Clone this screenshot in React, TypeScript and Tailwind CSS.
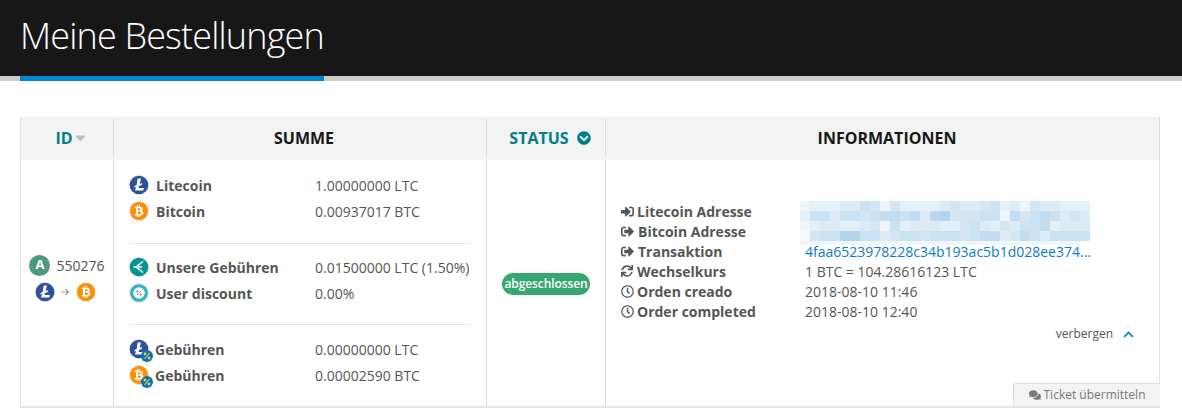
import React from "react";
import { FaBtc, FaSignInAlt, FaSignOutAlt, FaSync, FaRegClock, FaComments, FaChevronCircleDown, FaCaretDown } from "react-icons/fa";

const Ltc = ({ s = 20 }: { s?: number }) => (
  <svg width={s} height={s} viewBox="0 0 20 20" className="shrink-0 block">
    <circle cx="10" cy="10" r="10" fill="#e6e6e6" />
    <circle cx="10" cy="10" r="9.3" fill="#2f5199" />
    <path d="M8.6 3.6h3.4L10.6 9l2.6-1-.5 2-2.7 1-.5 2h5.4l-.7 2.6H6l1.1-3.7-1.8.7.5-1.9 1.9-.7z" fill="#fff" />
  </svg>
);

const Btc = ({ s = 20 }: { s?: number }) => (
  <span className="relative shrink-0 flex items-center justify-center rounded-full bg-[#ff8f00] border border-[#e6e6e6] text-white" style={{ width: s, height: s }}>
    <FaBtc size={s * 0.6} />
  </span>
);

const Pct = () => (
  <svg width="12" height="12" viewBox="0 0 12 12" className="absolute -right-[4px] -bottom-[3px]">
    <circle cx="6" cy="6" r="6" fill="#0a6fb5" />
    <circle cx="4" cy="4" r="1.4" fill="#e6cf45" />
    <circle cx="8" cy="8" r="1.4" fill="#e6cf45" />
    <path d="M8.5 3 3.5 9" stroke="#e6cf45" strokeWidth="1.1" />
  </svg>
);

const Fee = () => (
  <svg width="20" height="20" viewBox="0 0 20 20" className="shrink-0 block">
    <circle cx="10" cy="10" r="10" fill="#e6e6e6" />
    <circle cx="10" cy="10" r="9.3" fill="#05948f" />
    <path d="M14 4.5 7 10l7 5.5M4.5 10 H7 M9 10 L13 10" stroke="#fff" strokeWidth="1.5" fill="none" />
  </svg>
);

const Discount = () => (
  <svg width="20" height="20" viewBox="0 0 20 20" className="shrink-0 block">
    <circle cx="10" cy="10" r="10" fill="#e6e6e6" />
    <circle cx="10" cy="10" r="7.3" fill="#fff" stroke="#2fb1bf" strokeWidth="3" />
    <circle cx="8.3" cy="8.6" r="1" fill="#2f8f9f" />
    <circle cx="11.7" cy="11.4" r="1" fill="#2f8f9f" />
    <path d="M12 8 8 12" stroke="#2f8f9f" strokeWidth=".8" />
  </svg>
);

const AmountRow = ({ icon, label, value, tight }: { icon: React.ReactNode; label: string; value: string; tight?: boolean }) => (
  <div className="flex items-center h-[26px]">
    <div className={`flex items-center w-[186px] font-bold text-[#555] ${tight ? "gap-[6px]" : "gap-[7px]"}`}>
      {icon}
      <span>{label}</span>
    </div>
    <span className="text-[#555] whitespace-nowrap">{value}</span>
  </div>
);

const InfoRow = ({ icon, label, gap, children }: { icon: React.ReactNode; label: string; gap: string; children: React.ReactNode }) => (
  <div className="flex items-center h-5">
    <div className={`flex items-center w-[185px] font-bold text-[#555] ${gap}`}>
      <span className="w-[14px] flex justify-center text-[#555]">{icon}</span>
      <span>{label}</span>
    </div>
    <div className="text-[#555] whitespace-nowrap">{children}</div>
  </div>
);

const mosaic = [
  "12223354142222343345231433222",
  "25535545665637844455164565343",
  "12332234152333224532435562333",
  "04558855345545554566346535555",
];

const shade = (v: number) => {
  const t = v / 9;
  const mix = (a: number, b: number) => Math.round(a + (b - a) * t);
  return `rgb(${mix(245, 170)},${mix(249, 207)},${mix(252, 234)})`;
};

const Mosaic = () => (
  <div className="w-[290px]">
    {mosaic.map((row, i) => (
      <div key={i} className="flex h-[10px]">
        {row.split("").map((c, j) => (
          <div key={j} className="w-[10px] h-full" style={{ background: shade(Number(c)) }} />
        ))}
      </div>
    ))}
    <div className="h-[4px] w-[280px] bg-[#f1f6fb]" />
  </div>
);

const HeadCell = ({ children, last, pad }: { children: React.ReactNode; last?: boolean; pad: string }) => (
  <div className={`h-full flex items-center justify-center relative pb-[2px] ${pad}`}>
    {children}
    {!last && <span className="absolute right-0 top-[2px] bottom-[3px] w-px bg-[#dcdcdc]" />}
  </div>
);

export default function App() {
  return (
    <div className="w-[1182px] h-[411px] overflow-hidden bg-white text-[14px] font-['Open_Sans',sans-serif]">
      <header className="h-[76px] bg-[#171717] pl-5 flex items-center">
        <h1 className="text-[36px] font-light tracking-[-0.83px] text-white leading-none -mt-[5px]">Meine Bestellungen</h1>
      </header>
      <div className="h-[5px] bg-[#cccccc]">
        <div className="h-full w-[304px] ml-5 bg-[#0088d2]" />
      </div>

      <div className="ml-5 mr-[22px] mt-9 relative">
        <div className="grid grid-cols-[93px_373px_119px_553px] h-[43px] bg-[#f3f3f3] text-[16px] font-bold border-l border-[#dcdcdc] border-r">
          <HeadCell pad="pl-[9px]">
            <span className="text-[#007d8a]">ID</span>
            <FaCaretDown size={17} className="text-[#bdbdbd] -ml-[1px]" />
          </HeadCell>
          <HeadCell pad="pl-[7px]"><span className="text-[#171717]">SUMME</span></HeadCell>
          <HeadCell pad="pl-[7px]">
            <span className="text-[#007d8a]">STATUS</span>
            <FaChevronCircleDown size={14} className="text-[#007d8a] ml-2" />
          </HeadCell>
          <HeadCell last pad="pl-[9px]"><span className="text-[#171717]">INFORMATIONEN</span></HeadCell>
        </div>

        <div className="grid grid-cols-[93px_373px_119px_553px] h-[248px] border-l border-r border-b-2 border-[#e4e4e4]">
          <div className="border-r border-[#dcdcdc] flex flex-col items-center justify-center pb-[10px]">
            <div className="flex items-center gap-[6px]">
              <span className="w-[21px] h-[21px] rounded-full bg-[#4f9a7c] text-white text-[13px] font-bold flex items-center justify-center">A</span>
              <span className="text-[#555]">550276</span>
            </div>
            <div className="flex items-center mt-[6px] gap-[6px] -ml-[4px]">
              <Ltc />
              <svg width="9" height="8" viewBox="0 0 9 8"><path d="M0 4h7.5M4.5 1l3 3-3 3" stroke="#999" strokeWidth="1.2" fill="none" /></svg>
              <Btc />
            </div>
          </div>

          <div className="border-r border-[#dcdcdc] pl-[15px] pr-4 pt-[12px]">
            <AmountRow icon={<Ltc />} label="Litecoin" value="1.00000000 LTC" />
            <AmountRow icon={<Btc />} label="Bitcoin" value="0.00937017 BTC" />
            <div className="h-px bg-[#e4e4e4] mt-[19px] mb-[10px] ml-px" />
            <AmountRow icon={<Fee />} label="Unsere Gebühren" value="0.01500000 LTC (1.50%)" />
            <AmountRow icon={<Discount />} label="User discount" value="0.00%" />
            <div className="h-px bg-[#e4e4e4] mt-[18px] mb-[11px] ml-px" />
            <AmountRow tight icon={<span className="relative shrink-0"><Ltc /><Pct /></span>} label="Gebühren" value="0.00000000 LTC" />
            <AmountRow tight icon={<span className="relative shrink-0"><Btc /><Pct /></span>} label="Gebühren" value="0.00002590 BTC" />
          </div>

          <div className="border-r border-[#dcdcdc] flex items-center justify-center pt-[1px]">
            <span className="h-[22px] w-[88px] rounded-full bg-[#36a76f] text-white text-[12px] font-semibold tracking-[-0.1px] flex items-center justify-center whitespace-nowrap">abgeschlossen</span>
          </div>

          <div className="pl-[14px] pt-[41px]">
            <div className="relative">
              <InfoRow icon={<FaSignInAlt size={13} />} label="Litecoin Adresse" gap="gap-[3px]"><div className="h-5" /></InfoRow>
              <InfoRow icon={<FaSignOutAlt size={13} />} label="Bitcoin Adresse" gap="gap-[4px]"><div className="h-5" /></InfoRow>
              <InfoRow icon={<FaSignOutAlt size={13} />} label="Transaktion" gap="gap-[4px]">
                <a className="text-[#0a7cc4]">4faa6523978228c34b193ac5b1d028ee374...</a>
              </InfoRow>
              <InfoRow icon={<FaSync size={12} />} label="Wechselkurs" gap="gap-[3px]">1 BTC = 104.28616123 LTC</InfoRow>
              <InfoRow icon={<FaRegClock size={13} />} label="Orden creado" gap="gap-[3px]">2018-08-10 11:46</InfoRow>
              <InfoRow icon={<FaRegClock size={13} />} label="Order completed" gap="gap-[3px]">2018-08-10 12:40</InfoRow>
              <div className="absolute left-[180px] top-0"><Mosaic /></div>
            </div>
            <div className="flex items-center justify-end pr-[25px] mt-[1px] h-[24px] text-[12px] text-[#555]">
              <span>verbergen</span>
              <svg width="11" height="7" viewBox="0 0 11 7" className="ml-[10px]"><path d="M1 6l4.5-4.5L10 6" stroke="#0a7cc4" strokeWidth="1.7" fill="none" /></svg>
            </div>
          </div>
        </div>

        <div className="absolute right-0 bottom-[2px] w-[147px] h-[23px] bg-[#f3f3f3] border-l border-t border-[#dcdcdc] rounded-tl-[3px] flex items-center justify-center gap-[3px] text-[12px] text-[#777]">
          <FaComments size={12} />
          <span>Ticket übermitteln</span>
        </div>
      </div>
    </div>
  );
}
